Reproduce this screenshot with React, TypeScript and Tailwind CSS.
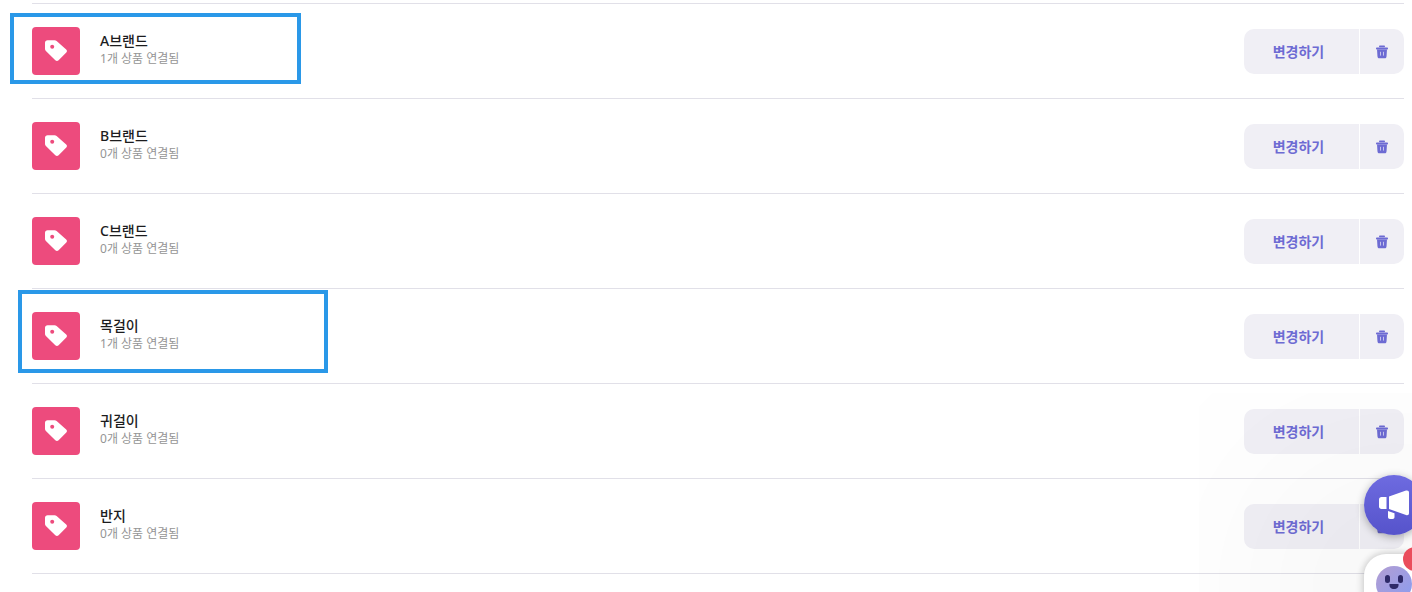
type Brand = {
    name: string;
    count: number;
    highlight?: string;
};

const brands: Brand[] = [
    { name: "A브랜드", count: 1, highlight: "-left-[22px] top-[9px] w-[291px] h-[71px]" },
    { name: "B브랜드", count: 0 },
    { name: "C브랜드", count: 0 },
    { name: "목걸이", count: 1, highlight: "-left-[14px] top-px w-[310px] h-[83px]" },
    { name: "귀걸이", count: 0 },
    { name: "반지", count: 0 },
];

function TagIcon() {
    return (
        <svg viewBox="0 0 24 24" className="w-6 h-6" fill="none" aria-hidden="true">
            <path
                d="M1 3.8C1 2.3 2.1 1.2 3.6 1.2H10.6C11.4 1.2 12 1.4 12.6 2L22.2 10.6C23.2 11.5 23.2 12.6 22.3 13.5L14.6 21.3C13.6 22.3 12.3 22.3 11.3 21.3L1.9 12.1C1.3 11.5 1 10.9 1 10.1Z"
                fill="#fff"
            />
            <circle cx="8.2" cy="7.8" r="2" fill="#ed4b7d" />
        </svg>
    );
}

function TrashIcon() {
    return (
        <svg viewBox="0 0 14 14" className="w-3.5 h-3.5" fill="none" aria-hidden="true">
            <rect x="4" y="0.6" width="6" height="1.6" rx="0.8" fill="#6d6bd3" />
            <rect x="1" y="2.4" width="12" height="2.2" rx="0.8" fill="#6d6bd3" />
            <path d="M2 4.4H12L11.5 11.4C11.4 12.7 10.7 13.3 9.5 13.3H4.5C3.3 13.3 2.6 12.7 2.5 11.4Z" fill="#6d6bd3" />
            <path d="M5.5 6.8V10.6M8.5 6.8V10.6" stroke="#c5c4ec" strokeWidth="1" />
        </svg>
    );
}

function BrandRow({ brand }: { brand: Brand }) {
    return (
        <li className="relative flex items-start gap-5 py-[23px] border-b border-[#e1e0e8]">
            <div className="w-12 h-12 shrink-0 flex items-center justify-center rounded-sm bg-[#ed4b7d]">
                <TagIcon />
            </div>

            <div className="flex-1 min-w-0 pt-[5px]">
                <h3 className="text-sm leading-[18px] font-medium text-[#1c1c1e]">{brand.name}</h3>
                <p className="text-xs leading-[18px] text-[#959595]">{brand.count}개 상품 연결됨</p>
            </div>

            <div className="flex gap-px mt-0.5 h-[45px] shrink-0 text-[#6d6bd3]">
                <button className="w-[115px] pr-1.5 rounded-l-[10px] bg-[#f0eff5] text-sm font-bold cursor-pointer">
                    변경하기
                </button>
                <button
                    aria-label="삭제"
                    className="w-11 flex items-center justify-center rounded-r-[10px] bg-[#f0eff5] cursor-pointer"
                >
                    <TrashIcon />
                </button>
            </div>

            {brand.highlight && (
                <div className={`absolute border-4 border-[#2a98e8] pointer-events-none ${brand.highlight}`} />
            )}
        </li>
    );
}

export default function App() {
    return (
        <main className="pt-[3px] pl-8 pr-2 bg-white font-['Noto_Sans','Noto_Sans_CJK_KR',sans-serif]">
            <ul className="border-t border-[#e1e0e8]">
                {brands.map((brand) => (
                    <BrandRow key={brand.name} brand={brand} />
                ))}
            </ul>

            {/* Floating buttons */}
            <button
                aria-label="채팅"
                className="fixed -right-3 -bottom-[22px] w-[60px] h-[60px] rounded-[22px] bg-white shadow-[0_0_8px_rgba(0,0,0,0.25),0_4px_240px_60px_rgba(0,0,0,0.1)] cursor-pointer"
            >
                <svg viewBox="0 0 60 60" className="w-full h-full" aria-hidden="true">
                    <defs>
                        <linearGradient id="face" x1="0" y1="0" x2="1" y2="1">
                            <stop offset="0" stopColor="#b39ed2" />
                            <stop offset="1" stopColor="#8b9cf0" />
                        </linearGradient>
                    </defs>
                    <circle cx="30" cy="30" r="18" fill="url(#face)" />
                    <rect x="21" y="21" width="5" height="8" rx="2.5" fill="#2e2a68" />
                    <rect x="34" y="21" width="5" height="8" rx="2.5" fill="#2e2a68" />
                    <path d="M25.5 30H34.5C35 33 33 35 30 35C27 35 25 33 25.5 30Z" fill="#2e2a68" />
                </svg>
                <span className="absolute -top-[7px] left-[39px] w-6 h-6 rounded-full bg-[#ea4d5c]" />
            </button>
            <button
                aria-label="공지"
                className="fixed -right-3 bottom-[57px] w-[60px] h-[60px] rounded-full bg-linear-to-b from-[#6e6be0] to-[#5653cb] shadow-[0_2px_8px_rgba(0,0,0,0.3)] cursor-pointer"
            >
                <svg viewBox="0 0 60 60" className="w-full h-full" fill="#fff" aria-hidden="true">
                    <path d="M17.5 22H22.5V34H17.5C16 34 15 33 15 31.5V24.5C15 23 16 22 17.5 22Z" />
                    <path d="M25 21.5L42 15.6C43.8 15 45 16 45 17.6V38C45 39.8 43.8 40.7 42 40L25 34Z" />
                    <path d="M24 36L30.5 38.3V42C30.5 43.2 29.8 44 28.6 44H26C24.7 44 24 43.2 24 42Z" />
                </svg>
            </button>
        </main>
    );
}
